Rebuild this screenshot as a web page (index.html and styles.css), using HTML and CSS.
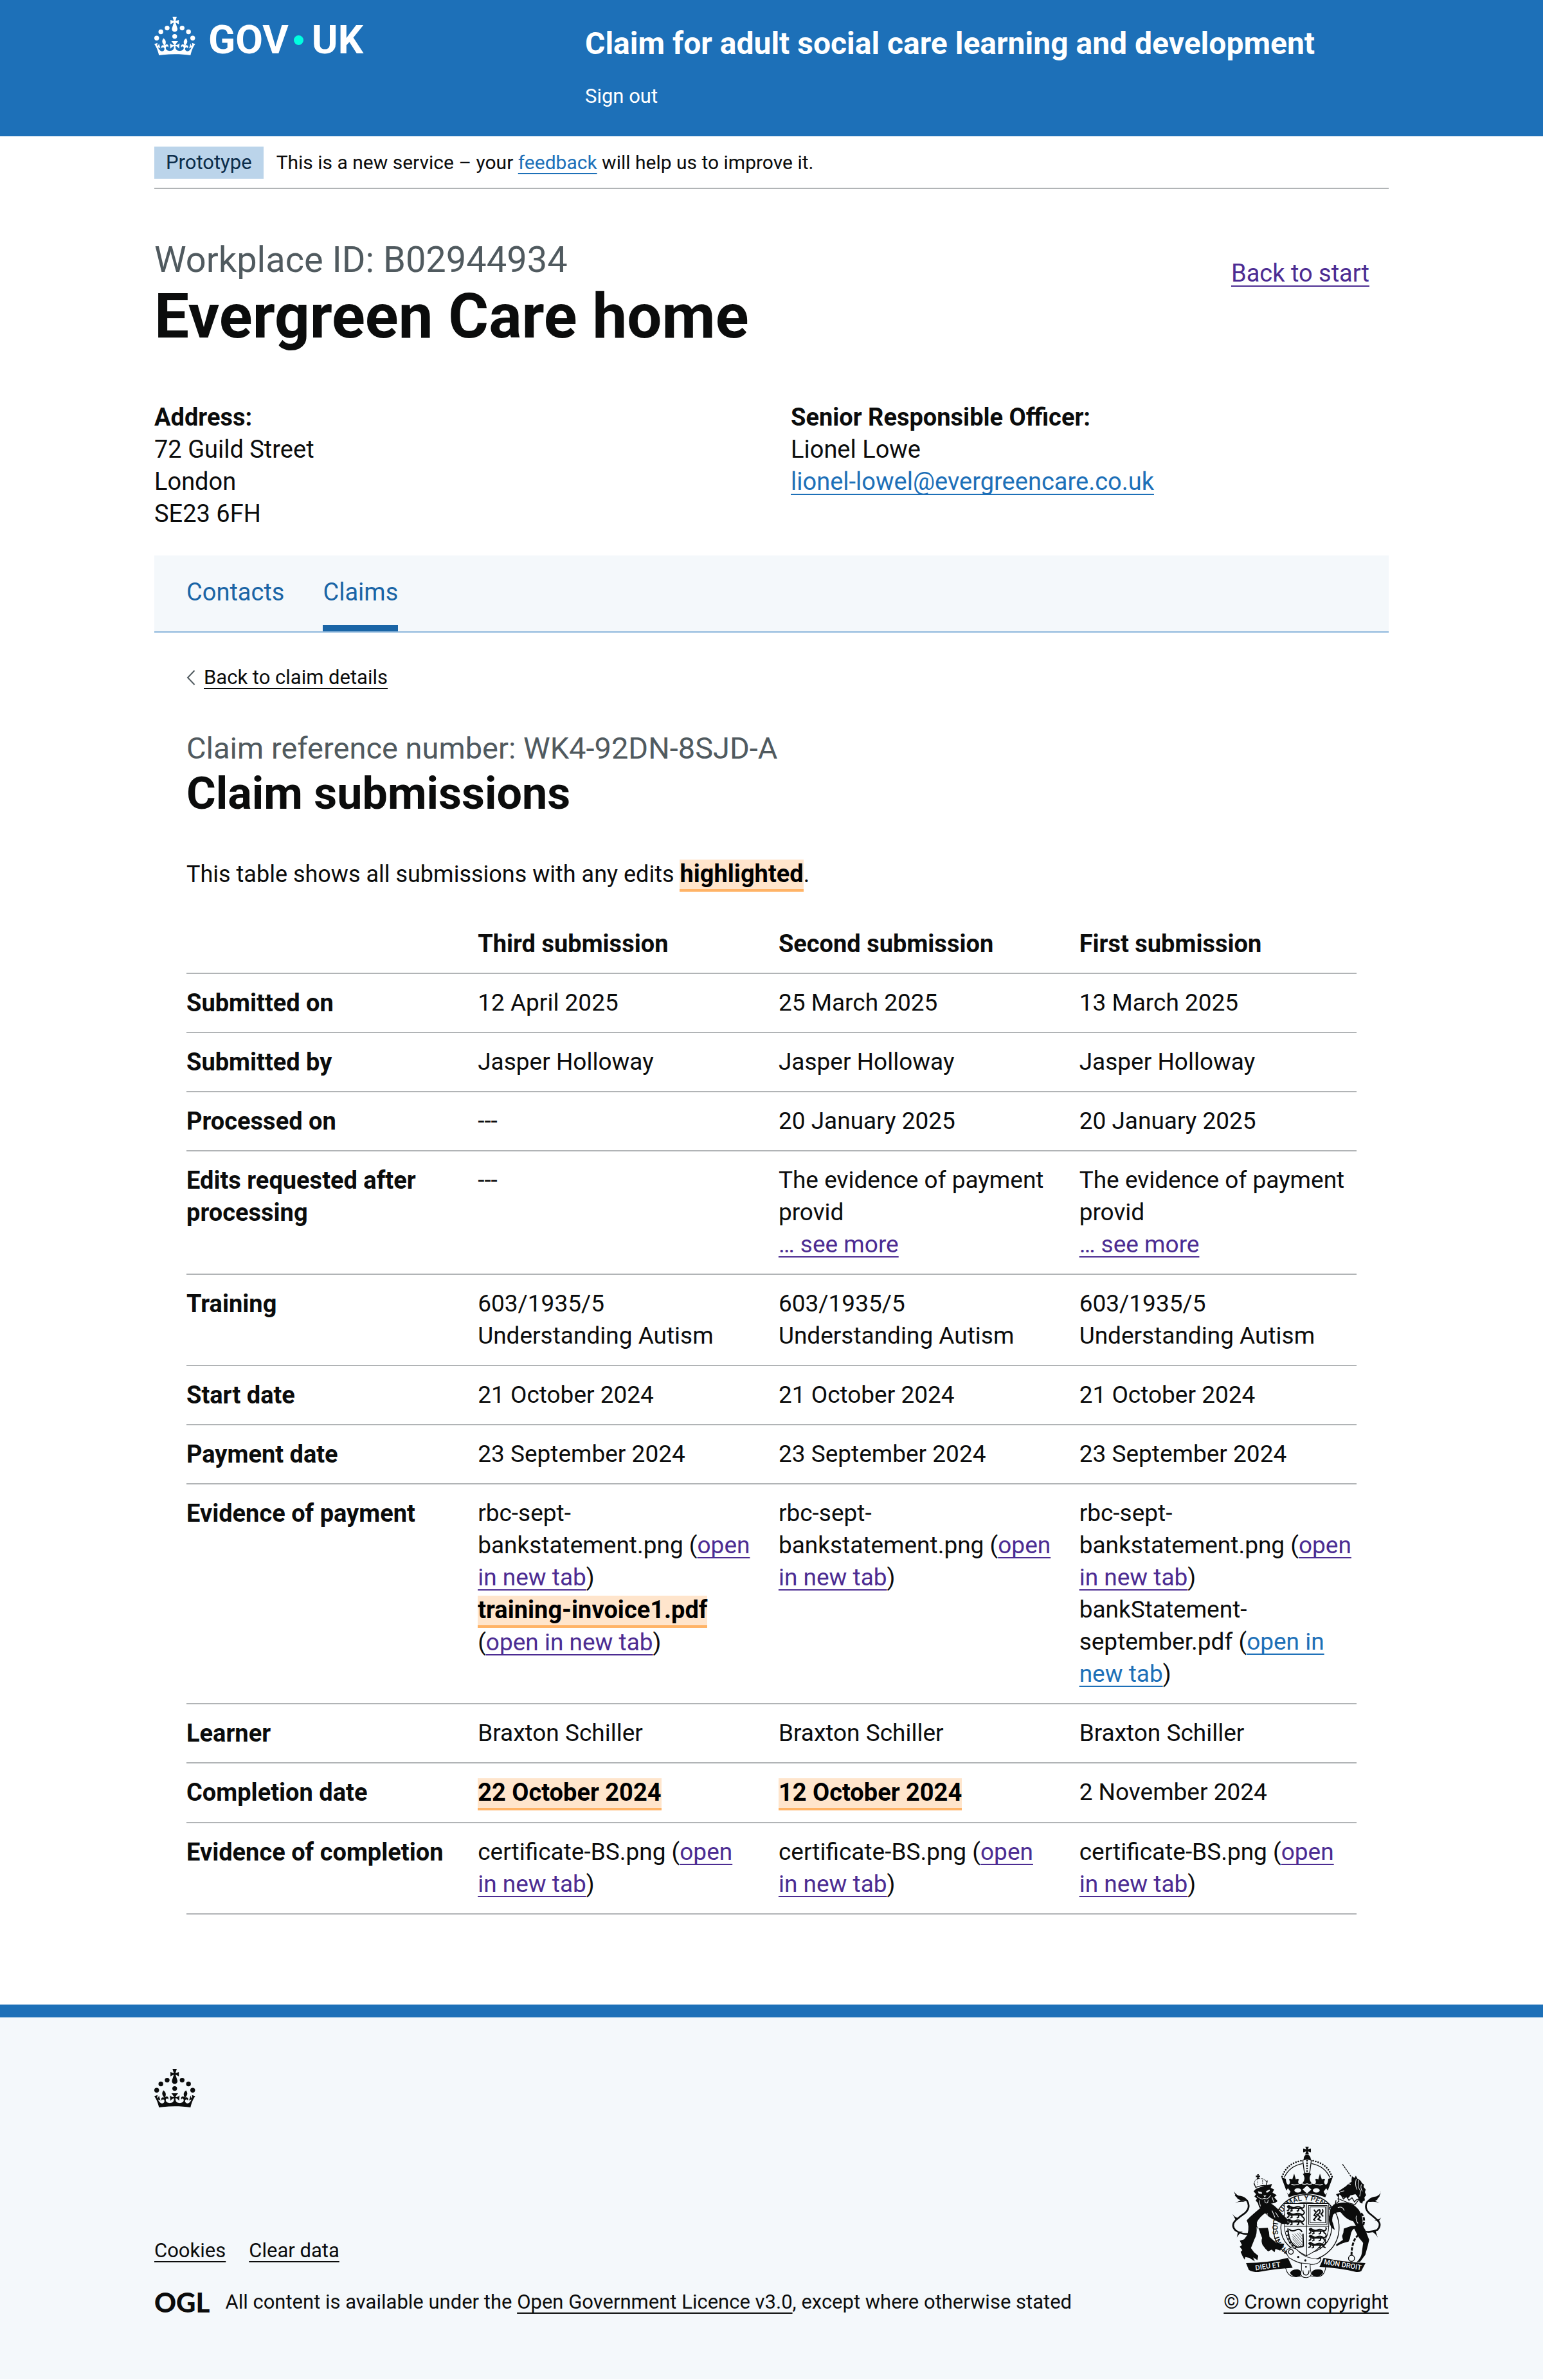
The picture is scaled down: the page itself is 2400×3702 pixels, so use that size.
FILE: index.html
```html
<!DOCTYPE html>
<html lang="en">
<head>
<meta charset="utf-8">
<meta name="viewport" content="width=device-width, initial-scale=1">
<title>Claim submissions – Claim for adult social care learning and development</title>
<link rel="stylesheet" href="styles.css">
</head>
<body>
<svg width="0" height="0" class="sprite" aria-hidden="true">
  <symbol id="crown" viewBox="0 0 64 60">
    <circle cx="20" cy="17.6" r="3.7"/><circle cx="10.2" cy="23.5" r="3.7"/><circle cx="3.7" cy="33.2" r="3.7"/>
    <circle cx="31.7" cy="30.6" r="3.7"/><circle cx="43.3" cy="17.6" r="3.7"/><circle cx="53.2" cy="23.5" r="3.7"/><circle cx="59.7" cy="33.2" r="3.7"/>
    <path d="M33.1,9.8c.2-.1.3-.3.5-.5l4.6,2.4v-6.8l-4.6,1.5c-.1-.2-.3-.3-.5-.5l1.9-5.9h-6.7l1.9,5.9c-.2.1-.3.3-.5.5l-4.6-1.5v6.8l4.6-2.4c.1.2.3.3.5.5l-2.6,8c-.9,2.8,1.2,5.7,4.1,5.7h0c3,0,5.1-2.9,4.1-5.7l-2.6-8ZM37,37.9s-3.4,3.8-4.1,6.1c2.2,0,4.2-.5,6.4-2.8l-.7,8.5c-2-2.8-4.4-4.1-5.7-3.8.1,3.1.5,6.7,5.8,7.2,3.7.3,6.7-1.5,7-3.8.4-2.6-2-4.3-3.7-1.6-1.4-4.5,2.4-6.1,4.9-3.2-1.9-4.5-1.8-7.7,2.4-10.9,3,4,2.6,7.3-1.2,11.1,2.4-1.3,6.2,0,4,4.6-1.2-2.8-3.7-2.2-4.2.2-.3,1.7.7,3.7,3,4.2,1.9.3,4.7-.9,7-5.9-1.3,0-2.4.7-3.9,1.7l2.4-8c.6,2.3,1.4,3.7,2.2,4.5.6-1.6.5-2.8,0-5.3l5,1.8c-2.6,3.6-5.2,8.7-7.3,17.5-7.4-1.1-15.7-1.7-24.5-1.7h0c-8.8,0-17.1.6-24.5,1.7-2.1-8.9-4.7-13.9-7.3-17.5l5-1.8c-.5,2.5-.6,3.7,0,5.3.8-.8,1.6-2.3,2.2-4.5l2.4,8c-1.5-1-2.6-1.7-3.9-1.7,2.3,5,5.2,6.2,7,5.9,2.3-.4,3.3-2.4,3-4.2-.5-2.4-3-3.1-4.2-.2-2.2-4.6,1.6-6,4-4.6-3.7-3.7-4.2-7.1-1.2-11.1,4.2,3.2,4.3,6.4,2.4,10.9,2.5-2.8,6.3-1.3,4.9,3.2-1.8-2.7-4.1-1-3.7,1.6.3,2.3,3.3,4.1,7,3.8,5.4-.5,5.7-4.2,5.8-7.2-1.3-.2-3.7,1-5.7,3.8l-.7-8.5c2.2,2.3,4.2,2.7,6.4,2.8-.7-2.3-4.1-6.1-4.1-6.1h10.6,0Z"/>
  </symbol>
</svg>

<header class="header">
  <div class="container header-grid">
    <a class="logo" href="#" aria-label="GOV.UK">
      <svg class="crown" aria-hidden="true"><use href="#crown"/></svg>
      <span class="logo-text">GOV</span><span class="logo-dot"></span><span class="logo-text">UK</span>
    </a>
    <div class="header-content">
      <a class="service-name" href="#">Claim for adult social care learning and development</a>
      <nav><a class="sign-out" href="#">Sign out</a></nav>
    </div>
  </div>
</header>

<div class="container">
  <div class="phase-banner">
    <strong class="tag">Prototype</strong>
    <span>This is a new service – your <a class="link" href="#">feedback</a> will help us to improve it.</span>
  </div>

  <main class="main">
    <div class="title-row">
      <div>
        <p class="caption-xl">Workplace ID: B02944934</p>
        <h1 class="heading-xl">Evergreen Care home</h1>
      </div>
      <a class="link visited start-link" href="#">Back to start</a>
    </div>

    <div class="details">
      <div>
        <strong>Address:</strong><br>72 Guild Street<br>London<br>SE23 6FH
      </div>
      <div>
        <strong>Senior Responsible Officer:</strong><br>Lionel Lowe<br>
        <a class="link" href="mailto:lionel-lowel@evergreencare.co.uk">lionel-lowel@evergreencare.co.uk</a>
      </div>
    </div>

    <nav class="tabs" aria-label="Workplace">
      <a class="tab" href="#">Contacts</a>
      <a class="tab current" href="#" aria-current="page">Claims</a>
    </nav>

    <section class="claim">
      <div class="back">
        <svg class="chevron" viewBox="0 0 14 24" aria-hidden="true"><path d="M12.500 1 2 12l10.500 11"/></svg>
        <a class="link plain" href="#">Back to claim details</a>
      </div>

      <p class="caption-l">Claim reference number: WK4-92DN-8SJD-A</p>
      <h2 class="heading-l">Claim submissions</h2>
      <p class="intro">This table shows all submissions with any edits <mark>highlighted</mark>.</p>

      <table class="table">
        <colgroup><col class="col-label"><col class="col-entry"><col class="col-entry"><col></colgroup>
        <thead>
          <tr><td></td><th scope="col">Third submission</th><th scope="col">Second submission</th><th scope="col">First submission</th></tr>
        </thead>
        <tbody>
          <tr><th scope="row">Submitted on</th><td>12 April 2025</td><td>25 March 2025</td><td>13 March 2025</td></tr>
          <tr><th scope="row">Submitted by</th><td>Jasper Holloway</td><td>Jasper Holloway</td><td>Jasper Holloway</td></tr>
          <tr><th scope="row">Processed on</th><td>---</td><td>20 January 2025</td><td>20 January 2025</td></tr>
          <tr>
            <th scope="row">Edits requested after processing</th>
            <td>---</td>
            <td>The evidence of payment provid<br><a class="link visited" href="#">… see more</a></td>
            <td>The evidence of payment provid<br><a class="link visited" href="#">… see more</a></td>
          </tr>
          <tr><th scope="row">Training</th><td>603/1935/5<br>Understanding Autism</td><td>603/1935/5<br>Understanding Autism</td><td>603/1935/5<br>Understanding Autism</td></tr>
          <tr><th scope="row">Start date</th><td>21 October 2024</td><td>21 October 2024</td><td>21 October 2024</td></tr>
          <tr><th scope="row">Payment date</th><td>23 September 2024</td><td>23 September 2024</td><td>23 September 2024</td></tr>
          <tr>
            <th scope="row">Evidence of payment</th>
            <td>rbc-sept-bankstatement.png (<a class="link visited" href="#">open in new tab</a>)<br><mark>training-invoice1.pdf</mark> (<a class="link visited" href="#">open in new tab</a>)</td>
            <td>rbc-sept-bankstatement.png (<a class="link visited" href="#">open in new tab</a>)</td>
            <td>rbc-sept-bankstatement.png (<a class="link visited" href="#">open in new tab</a>)<br>bankStatement-september.pdf (<a class="link" href="#">open in new tab</a>)</td>
          </tr>
          <tr><th scope="row">Learner</th><td>Braxton Schiller</td><td>Braxton Schiller</td><td>Braxton Schiller</td></tr>
          <tr><th scope="row">Completion date</th><td><mark>22 October 2024</mark></td><td><mark>12 October 2024</mark></td><td>2 November 2024</td></tr>
          <tr>
            <th scope="row">Evidence of completion</th>
            <td>certificate-BS.png (<a class="link visited" href="#">open in new tab</a>)</td>
            <td>certificate-BS.png (<a class="link visited" href="#">open in new tab</a>)</td>
            <td>certificate-BS.png (<a class="link visited" href="#">open in new tab</a>)</td>
          </tr>
        </tbody>
      </table>
    </section>
  </main>
</div>

<footer class="footer">
  <div class="container">
    <svg class="crown" aria-hidden="true"><use href="#crown"/></svg>
    <div class="footer-meta">
      <div>
        <div class="footer-links">
          <a class="link plain" href="#">Cookies</a>
          <a class="link plain" href="#">Clear data</a>
        </div>
        <div class="licence">
          <span class="ogl">OGL</span>
          <span>All content is available under the <a class="link plain" href="#">Open Government Licence v3.0</a>, except where otherwise stated</span>
        </div>
      </div>
      <div class="copyright">
        <svg class="arms" viewBox="160 112 700 618" aria-hidden="true">
          <defs>
            <path id="garter-arc" d="M427 597A130 130 0 1 1 573 606"/>
            <!-- one half of the royal crown, mirrored for the other -->
            <g id="crown-half">
              <path d="M513 240h-20q12 18 6 32-8 20-22 16-10-6-2-20-6-8-14 0l-8-28-9 28q-9-8-15 0 9 12 0 22-12 6-15-26l-20-6 34 92q40-16 85-16z"/>
              <path class="dots" d="M397 254Q420 192 486 180"/>
              <path class="line4" d="M407 258Q430 205 492 193"/>
              <ellipse class="hole" cx="470" cy="318" rx="16" ry="10"/>
              <path class="hole" d="M414 322l10-14 12 16-8 14zM513 296l20 18-20 18-20-18z"/>
              <path class="hole" d="M440 288q22 8 40-4v3q-18 12-40 5zM491 285q11 6 22 0v4q-12 5-24 0z"/>
            </g>
            <!-- a walking lion for the shield -->
            <g id="passant">
              <path class="line5" d="M4 10q6-10 14-3 10 8 24 3 14-6 26 2 8 6 14-4 4-8-3-8M14 12l-4 12-8 3M24 13l2 13-8 3M58 13l-2 13-8 3M70 14l4 10 8 4"/>
              <circle cx="10" cy="8" r="7"/><path d="M14 8q14 10 26 3l30 2-2 6-30-1-20 2z"/>
            </g>
          </defs>

          <!-- garter and shield -->
          <circle class="line4 paper" cx="509" cy="491" r="153"/>
          <circle class="line4 paper" cx="509" cy="491" r="118"/>
          <text class="motto"><textPath href="#garter-arc">HONI SOIT QUI MAL Y PENSE</textPath></text>
          <path class="line3 paper" d="M408 379h206v105q-2 92-104 138-100-46-102-138z"/>
          <path class="line3" d="M511 379v242M408 485h206"/>
          <use href="#passant" x="417" y="386"/><use href="#passant" x="417" y="417"/><use href="#passant" x="417" y="449"/>
          <use href="#passant" x="519" y="492"/><use href="#passant" x="519" y="524"/><use href="#passant" x="517" y="557"/>
          <path class="line3" d="M520 388h86v88h-86zM527 395h72v74h-72z"/>
          <path class="line5" d="M545 408l9 12-8 14 12 4-14 16 8 6M556 420q16-22 18-4-4 14-14 14l14 12-10 10 16 8M584 405q8 14-6 22l10 12"/>
          <path class="line5" d="M424 495q2 70 44 88l26-4M430 498q10 14 32 4 20-8 28 10M494 520l2 60"/>
          <path class="line5 studs" d="M421 505q4 60 42 82"/>
          <path class="line2" d="M446 522l46 52M444 532l44 48M446 544l34 38M456 520l36 40M466 516l26 30M476 514l16 18M448 558l22 24"/>

          <!-- crown -->
          <path d="M505 115h16l-4 13 14-5v18l-14-5 5 15h-18l5-15-14 5v-18l14 5z"/>
          <path d="M497 176q0-24 16-24t18 24l-6 12h-22z"/>
          <path class="paper line4" d="M493 178l8 60h24l8-60q-20-10-40 0z"/>
          <path class="dots" d="M513 180v58"/>
          <use href="#crown-half"/>
          <use href="#crown-half" transform="translate(1026 0) scale(-1 1)"/>

          <!-- lion -->
          <path d="M281 243h8l-2 7 7-2v9l-7-2 3 9h-11l3-9-7 2v-9l7 2z"/>
          <path class="dots small" d="M268 290q-2-26 24-27 30-1 34 24M284 268v26M306 264v26"/>
          <path class="line4" d="M266 284L274 304Q298 294 324 294L328 272"/>
          <path d="M264 322L276 310Q310 296 350 288L344 306 360 314 352 328 372 340 360 350 376 368 364 376 345 380 325 402 300 402 290 396 284 376 274 366 280 356 268 346 276 336z"/>
          <path d="M300 396L345 378Q376 398 400 432L420 450 424 474 398 474 362 456Q330 440 318 424 290 444 280 466 278 482 288 494L330 492Q338 512 338 534L372 564 408 566 388 598 366 590 362 606 348 594 332 602Q318 590 306 572 298 552 304 540L292 508 278 488Q282 520 268 546L252 586 266 606 286 622 282 642 262 630 270 648 244 632 226 628 222 640 212 622 204 604 212 596 200 580 210 572 200 552 220 546 236 524Q246 480 232 458 240 446 300 396z"/>
          <path class="hole" d="M284 322l18 4 2 8-16-2zM322 322l16-8 2 6-14 10zM310 342h14l-8 8z"/>
          <path class="cut" d="M280 344q10 12 26 14 8-6 18 0 12-4 20-18M316 362l2 12q8 6 12 0l2-12M290 364l6 28M350 350l8 22M280 478l12 34M328 424q-4 16 8 28M350 412l14 32M366 420l14 22"/>
          <path class="tail" d="M240 520q-30 4-60-16-22-24 0-46 20-18 46-36 26-26 8-56-10-8-20-8-24-2-34-20"/>
          <path d="M173 322q10 20 32 22 22 4 32 22l-16 2q-26-4-34-14l10 0q-20-10-24-32zM166 428l14 26 20-6q-20 0-34-20zM186 538l6-28 22 0q-18 8-28 28zM176 378l28-14 20 8q-28-4-48 6z"/>

          <!-- unicorn -->
          <path class="line4 dash" d="M678 196L718 254"/>
          <path d="M720 268l2-16 12 8 6-10 8 14q16 6 20 20l10 6-2 12 10 12-4 12 6 14-8 10 2 14-10 6-2 10-12-6q-6-26-20-38l-24 6q-8 16-22 14l-18-8-20-2-6-10 20-6q-8-4-6-10l32-22q10-14 26-20z"/>
          <path class="cut" d="M704 288q8-2 12 4M668 324l18-4M754 270q-10 30 8 50l-4 26M766 290q-6 16 4 32M742 264q-8 30 4 50"/>
          <path class="line4 paper" d="M662 334l-4 22q40 20 78 28l22-28-16 6-8 10-12-20-14 12-12-18-14 12-10-18z"/>
          <path d="M622 402q10-20 34-24 54-12 84 16 26 22 32 62-4 24 12 46l18 46-6 26-12 44-24 32-16 2q22-22 24-44l6-46-20-24-22-42q-12 8-16 28-2 20-10 32-30 6-56 22l-2-8 32-22-4-18q8-14 8-34l34-12 22-2-12-20q-34-8-58-42-24-2-36 12-8 26 0 40l8 30-12-8q-14-18-16-40z"/>
          <path class="cut" d="M656 398q22-8 30 14M742 436q-4 20 8 36"/>
          <path class="line4" d="M636 388l26-20-6-12M642 390l6-26"/>
          <path class="tail" d="M786 510q28 4 54-8 22-24 0-46-20-18-38-32-26-26-8-54 10-8 20-8 24-2 34-20"/>
          <path d="M857 326q-10 20-32 22-22 4-32 22l16 2q26-4 34-14h-10q20-10 24-36zM858 444l-12 18-20-6q20 0 32-12zM842 538l-10-30-18 2q18 8 28 28zM850 376l-28-12-20 8q28-4 48 4z"/>
          <path class="line4 chain" d="M764 424q20 20 12 50-12 40-38 66-18 32-18 78"/>
          <circle class="line4 paper" cx="720" cy="634" r="14"/>

          <!-- ribbon, buckle and mounts -->
          <path class="line3" d="M412 672q8 50 50 48 50-8 98 0 34 0 40-46"/>
          <path d="M434 700q10-16 36-14 18 4 16 22-2 12-30 10-20-4-22-18zM534 702q6-18 34-16 20 0 20 14-6 18-32 18-22 0-22-16z"/>
          <path class="line3 paper" d="M420 594q20-16 44-2 24 28 56 38 50 14 56 2 4 24-30 30-60 6-116-30-18-22-10-38z"/>
          <circle class="line4" cx="438" cy="604" r="11"/>
          <circle cx="472" cy="628" r="5"/><circle cx="505" cy="644" r="5"/>
          <path class="line3 paper" d="M487 656v34q-12 32 22 34 32-2 20-34l-2-30z"/>
          <path class="line4" d="M494 690q0 22 14 22t14-22"/><circle cx="508" cy="674" r="4"/>
          <path d="M229 656q100 0 195-24l22 46q-80 4-160 20-30 0-44-10zM590 632q90 20 195 24l-20 38q-14 6-30 2-80-18-164-22z"/>
          <text class="ribbon" transform="rotate(-8 274 690)" x="274" y="690">DIEU ET</text>
          <text class="ribbon" transform="rotate(9 590 661)" x="590" y="661">MON DROIT</text>
        </svg>
        <a class="link plain" href="#">© Crown copyright</a>
      </div>
    </div>
  </div>
</footer>
</body>
</html>
```
FILE: styles.css
```css
* { box-sizing: border-box; }

body {
  margin: 0;
  background: #fff;
  color: #0b0c0c;
  font-family: Roboto, "Liberation Sans", sans-serif;
  font-size: 38px;
  line-height: 50px;
}

p, h1, h2 { margin: 0; }
strong, th { font-weight: 700; }

.sprite { position: absolute; }
.container { max-width: 1920px; margin: 0 auto; }

.link {
  color: #1d70b8;
  text-decoration: underline;
  text-decoration-thickness: 2px;
  text-underline-offset: 6px;
  text-decoration-skip-ink: none;
}
.visited { color: #4c2c92; }
.plain { color: #0b0c0c; }

mark {
  padding-bottom: 2px;
  border-bottom: 4px solid #ffb366;
  background: #ffe5cc;
  color: #000;
  font-size: 38px;
  font-weight: 700;
}

/* Header */
.header { background: #1d70b8; color: #fff; }
.header a { color: #fff; text-decoration: none; }
.header-grid { display: grid; grid-template-columns: 1fr 2fr; column-gap: 45px; }
.logo { display: flex; align-items: flex-start; padding-top: 26px; }
.crown { display: block; width: 64px; height: 60px; fill: currentColor; }
.logo-text { font-size: 62px; font-weight: 700; line-height: 72px; }
.crown + .logo-text { margin-left: 20px; }
.logo-dot {
  width: 15px;
  height: 15px;
  margin: 29px 13px 0 8px;
  border-radius: 50%;
  background: #00ffe0;
}
.header-content { display: grid; row-gap: 32px; padding: 38px 0 42px; }
.service-name { font-size: 48px; font-weight: 700; line-height: 60px; }
.sign-out { display: block; font-size: 31px; line-height: 40px; }

/* Phase banner */
.phase-banner {
  display: flex;
  gap: 20px;
  padding: 16px 0 14px;
  border-bottom: 2px solid #b1b4b6;
  font-size: 30px;
}
.tag { padding: 0 18px; background: #bbd4ea; color: #0c2d4a; font-size: 31px; font-weight: 400; }

/* Workplace heading */
.main { padding: 80px 0 140px; }
.title-row { display: flex; justify-content: space-between; margin-bottom: 82px; }
.caption-xl { margin-bottom: 8px; color: #505a5f; font-size: 56px; line-height: 60px; }
.heading-xl { font-size: 96px; font-weight: 700; line-height: 100px; }
.start-link { margin: 26px 30px 0 0; }
.details { display: grid; grid-template-columns: 1fr 1fr; column-gap: 60px; margin-bottom: 40px; }

/* Tabs */
.tabs {
  display: flex;
  gap: 60px;
  padding: 0 50px;
  border-bottom: 2px solid #8eb8dc;
  background: #f4f8fb;
}
.tab {
  padding: 32px 0 26px;
  border-bottom: 10px solid transparent;
  color: #1a65a6;
  text-decoration: none;
}
.current { border-color: #1a65a6; }

/* Claim */
.claim { padding: 50px 50px 0; }
.back { display: flex; align-items: center; gap: 13px; margin-bottom: 60px; font-size: 31px; line-height: 40px; }
.chevron { width: 14px; height: 24px; fill: none; stroke: #505a5f; stroke-width: 2; }
.caption-l { color: #505a5f; font-size: 47px; line-height: 60px; }
.heading-l { margin-bottom: 60px; font-size: 70px; font-weight: 700; line-height: 80px; }
.intro { margin-bottom: 38px; font-size: 36px; }

.table { width: 100%; border-collapse: collapse; table-layout: fixed; }
.col-label { width: 24.9%; }
.col-entry { width: 25.7%; }
.table th, .table td {
  padding: 20px 40px 20px 0;
  border-bottom: 2px solid #b1b4b6;
  text-align: left;
  vertical-align: top;
}
.table td { font-size: 37px; }
.table th:last-child, .table td:last-child { padding-right: 0; }

/* Footer */
.footer {
  padding: 80px 0 100px;
  border-top: 20px solid #1d70b8;
  background: #f4f8fb;
  font-size: 31px;
  line-height: 40px;
}
.footer-meta { display: flex; justify-content: space-between; align-items: flex-end; margin-top: 60px; }
.footer-links { display: flex; gap: 36px; margin-bottom: 40px; }
.licence { display: flex; gap: 24px; }
.ogl { font-family: Lato, Roboto, sans-serif; font-size: 42px; font-weight: 900; }
.copyright { display: grid; justify-items: center; row-gap: 16px; }

.arms { display: block; width: 234px; height: 207px; fill: #0b0c0c; }
.arms [class*="line"], .arms .dots, .arms .cut, .arms .tail { fill: none; stroke: #0b0c0c; }
.arms .line2 { stroke-width: 2; }
.arms .line3 { stroke-width: 3; }
.arms .line4 { stroke-width: 4; }
.arms .line5 { stroke-width: 6; }
.arms .paper { fill: #f4f8fb; }
.arms .hole { fill: #f4f8fb; }
.arms .cut { stroke: #f4f8fb; stroke-width: 3; }
.arms .tail { stroke-width: 8; }
.arms .dots { stroke-width: 8; stroke-linecap: round; stroke-dasharray: 0 12; }
.arms .small { stroke-width: 4; stroke-dasharray: 0 7; }
.arms .dash { stroke-dasharray: 9 3; }
.arms .studs { stroke-dasharray: 6 12; stroke-width: 14; }
.arms .chain { stroke-width: 9; stroke-dasharray: 16 6; }
.arms .motto { font-size: 34px; font-weight: 500; }
.arms .ribbon { fill: #f4f8fb; font-size: 33px; font-weight: 500; }
```
